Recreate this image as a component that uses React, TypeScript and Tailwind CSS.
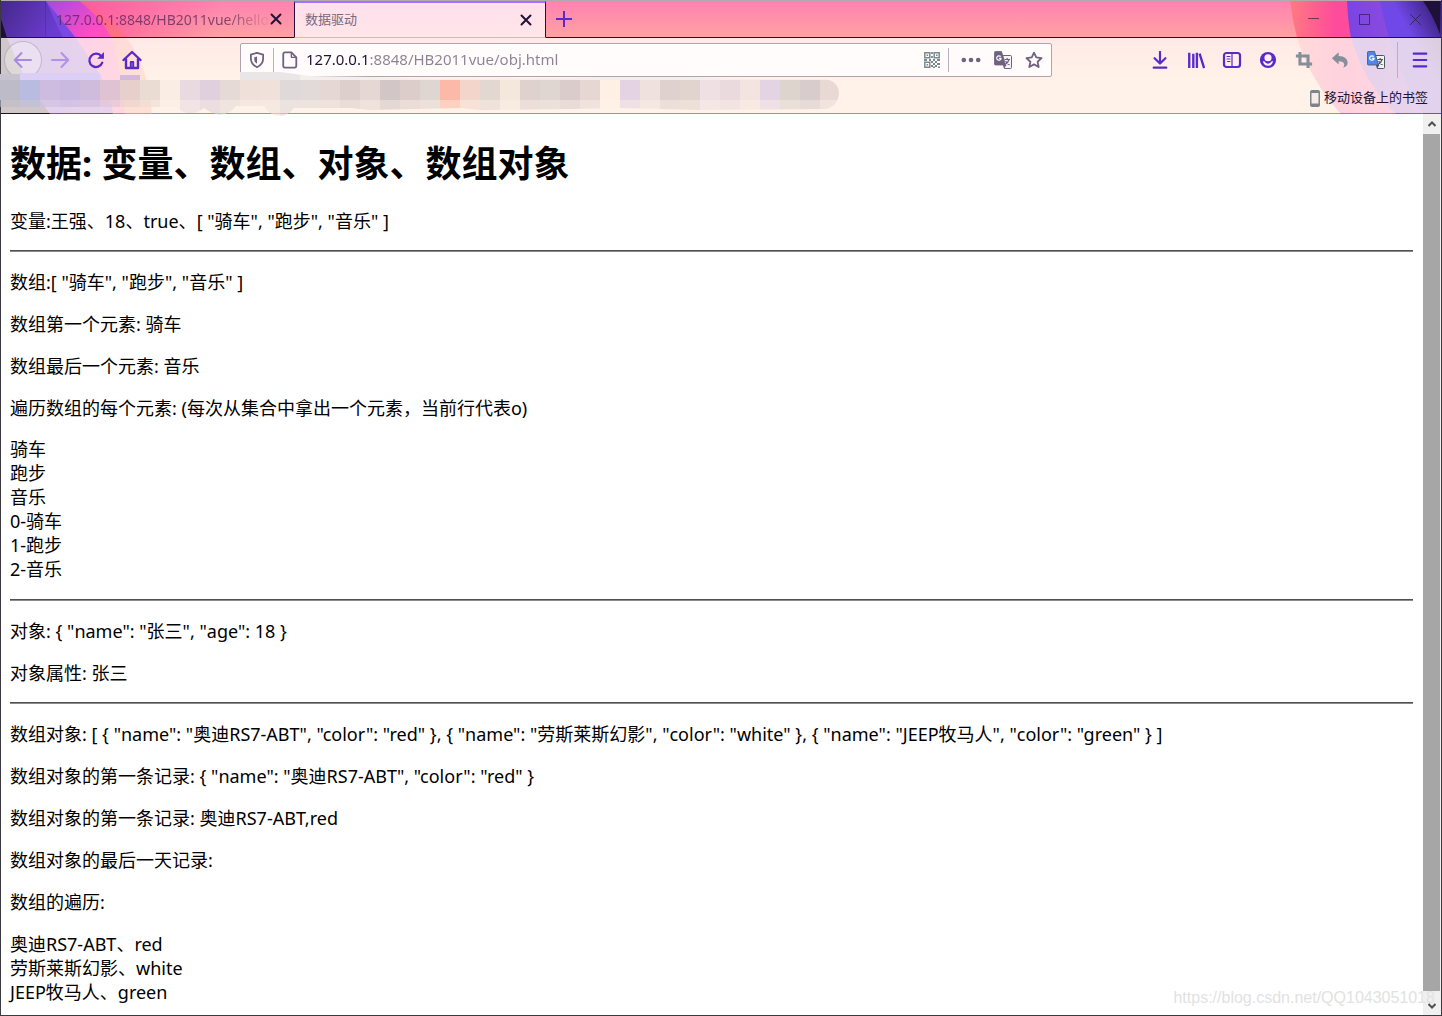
import type { ReactNode } from 'react'

const MOSAIC = [
  '#bdbbc8', '#b8bce0', '#cdbce0', '#c9b8e0', '#cfbbdc', '#e0c3d3', '#e7d0cc', '#ebdcd3', '#faede3', '#e9dae2',
  '#e0cfdc', '#e6dad7', '#efe1da', '#f0e2da', '#e0d9da', '#e2dad9', '#e5d7d4', '#dccfcc', '#e4d7d4', '#d3c6c6',
  '#dccdcb', '#dfd5d1', '#fdb9a8', '#f3d5cb', '#e3d7d2', '#f4e8dd', '#dfd2ce', '#dfd6d1', '#dacccb', '#e6d7d3',
  '#fef0e4', '#e4d3e3', '#efe1dd', '#dfd2ce', '#e1d4ce', '#efe0e3', '#eadadd', '#f3e4df', '#e4d3e2', '#ddd4cd',
  '#d9cccc', '#e8d9d5',
]

const hobbies = ['骑车', '跑步', '音乐']
const cars = [
  { name: '奥迪RS7-ABT', color: 'red' },
  { name: '劳斯莱斯幻影', color: 'white' },
  { name: 'JEEP牧马人', color: 'green' },
]

const listText = `[ ${hobbies.map((h) => `"${h}"`).join(', ')} ]`
const carText = (c: { name: string; color: string }) => `{ "name": "${c.name}", "color": "${c.color}" }`

function Icon({ children, fill, size = 20 }: { children: ReactNode; fill?: boolean; size?: number }) {
  return (
    <svg
      width={size}
      height={size}
      viewBox="0 0 20 20"
      fill={fill ? 'currentColor' : 'none'}
      stroke={fill ? 'none' : 'currentColor'}
      strokeWidth="2"
      strokeLinecap="round"
      strokeLinejoin="round"
      className="shrink-0"
      aria-hidden="true"
    >
      {children}
    </svg>
  )
}

function ToolButton({ label, className = '', children }: { label: string; className?: string; children: ReactNode }) {
  return (
    <button aria-label={label} className={`flex h-9 w-9 shrink-0 items-center justify-center ${className}`}>
      {children}
    </button>
  )
}

function CloseIcon() {
  return (
    <svg width="12" height="12" viewBox="0 0 12 12" stroke="#20123a" strokeWidth="2" strokeLinecap="round" aria-hidden="true">
      <path d="M1.5 1.5l9 9M10.5 1.5l-9 9" />
    </svg>
  )
}

function TranslateIcon({ front, back }: { front: string; back: string }) {
  return (
    <svg width="18" height="18" viewBox="0 0 18 18" aria-hidden="true">
      <path d="M8.5 4.5h8a1 1 0 0 1 1 1v11a1 1 0 0 1-1 1h-6z" fill="#f4f2f4" stroke={back} />
      <path d="M10.5 8.5h5.5M13.2 7v1.5M15 8.5c-.6 2.4-2 4-4 5M11.6 10c.7 1.8 2 3 4 3.8" fill="none" stroke={back} strokeWidth="1.2" />
      <path d="M9 14h3.5l-2.5 3.5z" fill={back} />
      <path d="M1.5.5h6l4 13.5h-10a1 1 0 0 1-1-1v-11.5a1 1 0 0 1 1-1z" fill={front} stroke={back} strokeWidth=".8" />
      <path d="M6.7 5.7a2.2 2.2 0 1 0 .4 1.600h-2" fill="none" stroke="#fff" strokeWidth="1.2" />
    </svg>
  )
}

function QrIcon() {
  return (
    <svg width="16" height="16" viewBox="0 0 16 16" fill="none" stroke="#7b8a90" aria-hidden="true">
      <path d="M.8.8h5v5h-5zM10.2.8h5v5h-5zM.8 10.2h5v5h-5z" strokeWidth="1.5" />
      <path d="M2.5 3.3h1.6M12 3.3h1.6M2.5 12.7h1.6" strokeWidth="1.6" />
      <path d="M8 0v2M8 4v2M0 8h3M5 8h2M9 8h2M13 8h3M7 10h2M11 10h2M9 12h2M13 12h3M7 14h2M11 14h2M9 15.5h2M14 15.5h2" strokeWidth="1.8" />
    </svg>
  )
}

// theme artwork behind the tab strip and toolbars
function ThemeArt() {
  return (
    <>
      <svg className="absolute left-0 top-0" width="220" height="113" aria-hidden="true">
        <defs>
          <linearGradient id="deep" x1="0" y1="0" x2="1" y2=".4">
            <stop offset="0" stopColor="#38206c" />
            <stop offset="1" stopColor="#6738cc" />
          </linearGradient>
          <linearGradient id="violet" x1="0" y1="0" x2="1" y2="0">
            <stop offset="0" stopColor="#6b43dc" />
            <stop offset=".6" stopColor="#7a48e2" />
            <stop offset="1" stopColor="#9044de" />
          </linearGradient>
          <linearGradient id="magenta" x1=".4" y1="0" x2="1" y2=".6">
            <stop offset="0" stopColor="#a64be0" />
            <stop offset=".5" stopColor="#ff4bc4" />
            <stop offset="1" stopColor="#ff5fb0" />
          </linearGradient>
          <linearGradient id="coral" x1=".4" y1="0" x2="1" y2=".5">
            <stop offset="0" stopColor="#ff4f9e" />
            <stop offset="1" stopColor="#ff8a6e" />
          </linearGradient>
          <linearGradient id="fadePink" x1="0" y1="0" x2="1" y2="0">
            <stop offset="0" stopColor="#ff5c9e" />
            <stop offset="1" stopColor="#ff5c9e" stopOpacity="0" />
          </linearGradient>
        </defs>
        <rect x="80" width="140" height="37" fill="url(#fadePink)" />
        <path d="M0 0h80Q125 25 140 62Q150 90 151 113H0z" fill="url(#coral)" />
        <path d="M0 0h78Q102 18 112 40Q122 80 124 113H0z" fill="url(#magenta)" />
        <path d="M0 0h45L75 37L100 75Q110 95 112 113H0z" fill="url(#violet)" />
        <path d="M0 0h45L62 37H0z" fill="url(#deep)" opacity=".75" />
        <path d="M0 18L6 37L25 80L49 113H0z" fill="#1c0f33" />
      </svg>
      <svg className="absolute right-0 top-0" width="200" height="113" aria-hidden="true">
        <defs>
          <linearGradient id="rPink" x1="0" y1="0" x2="1" y2="0">
            <stop offset="0" stopColor="#ff7a80" />
            <stop offset=".3" stopColor="#ff4b9b" />
            <stop offset="1" stopColor="#ff4fa8" />
          </linearGradient>
          <linearGradient id="rPlum" x1="0" y1="0" x2="1" y2="0">
            <stop offset="0" stopColor="#7a45e0" />
            <stop offset="1" stopColor="#a050e0" />
          </linearGradient>
          <linearGradient id="rViolet" x1="0" y1="1" x2="1" y2="0">
            <stop offset="0" stopColor="#7048e8" />
            <stop offset=".6" stopColor="#7048e8" />
            <stop offset="1" stopColor="#2c185e" />
          </linearGradient>
        </defs>
        <path d="M49 0Q52 22 57 40Q70 80 100 113H200V0z" fill="url(#rPink)" />
        <path d="M106 0Q107 22 110 37Q125 85 155 113H200V0z" fill="url(#rPlum)" />
        <path d="M139 0Q150 60 182 113H200V0z" fill="url(#rViolet)" />
        <path d="M182 0Q192 14 199 33V0z" fill="#1e1038" />
      </svg>
    </>
  )
}

// pixelated smear that hides the saved bookmarks
function HiddenBookmarks() {
  return (
    <svg className="absolute -left-px top-[34px]" width="840" height="44" aria-hidden="true">
      <defs>
        <clipPath id="smear">
          <path d="M0 2H20V1H100V8H240V0H280L310 4L370 5L430 7L580 6L600 5H690L740 7H826Q839 10 839 22Q838 34 826 37L700 38L620 36L570 37L480 38L460 36L370 38L350 36H294Q288 44 280 44Q270 44 264 34H236Q230 42 220 43Q210 41 204 36Q198 41 190 41Q182 41 176 35H0z" />
        </clipPath>
      </defs>
      <g clipPath="url(#smear)">
        <rect x="0" y="0" width="20" height="8" fill="#c6c3cf" />
        <rect x="20" y="0" width="80" height="8" fill="#dccff5" />
        <rect x="240" y="0" width="60" height="8" fill="#eae6e7" />
        <rect x="300" y="0" width="540" height="8" fill="#f3efed" />
        {MOSAIC.map((color, i) => (
          <g key={i} fill={color}>
            <rect x={i * 20} y="8" width="20" height="20" />
            <rect x={i * 20} y="28" width="20" height="16" opacity=".6" />
          </g>
        ))}
      </g>
      <rect x="120" y="3" width="20" height="5" fill="#d5b9dc" />
    </svg>
  )
}

function TabStrip() {
  return (
    <div className="relative flex h-[37px] border-b border-[#20123a] pl-[44px]">
      <button className="flex w-[249px] items-center justify-between border-l border-[#20123a]/20 pl-[10px] pr-3 text-[13px]">
        <span className="whitespace-nowrap bg-[linear-gradient(90deg,#4c2550b8_170px,#4c255010_212px)] bg-clip-text text-left text-[14px] text-transparent">
          127.0.0.1:8848/HB2011vue/hello
        </span>
        <CloseIcon />
      </button>
      <button className="-mb-px flex w-[252px] items-center justify-between border-x border-b border-t-2 border-x-[#20123a] border-b-[#c9bcc8] border-t-[#a970ff] bg-[linear-gradient(#ffe0ec,#ffe6e8)] pl-[10px] pr-[13px] text-[13px] text-[#796880]">
        数据驱动
        <CloseIcon />
      </button>
      <button aria-label="打开新标签页" className="flex w-9 items-center justify-center text-[#592acb]">
        <Icon>
          <path d="M10 2v16M2 10h16" strokeLinecap="butt" />
        </Icon>
      </button>
      <div className="ml-auto flex text-[#20123a]/60">
        <button aria-label="最小化" className="flex w-[51px] items-center justify-center">
          <svg width="11" height="11" stroke="currentColor" aria-hidden="true"><path d="M0 4.5h11" /></svg>
        </button>
        <button aria-label="最大化" className="flex w-[51px] items-center justify-center">
          <svg width="11" height="11" fill="none" stroke="currentColor" aria-hidden="true"><path d="M.5.5h10v10H.5z" /></svg>
        </button>
        <button aria-label="关闭" className="flex w-[51px] items-center justify-center">
          <svg width="11" height="11" stroke="currentColor" aria-hidden="true"><path d="M0 0l11 11M11 0L0 11" /></svg>
        </button>
      </div>
    </div>
  )
}

function UrlBar() {
  return (
    <div className="ml-[90px] flex h-[34px] w-[812px] items-center rounded-xs border border-[#b3a3ae] bg-[#fffcfb] text-[#6f6180]">
      <button aria-label="跟踪保护" className="flex w-8 justify-center">
        <Icon size={18}>
          <path d="M10 2L16.8 4v4.500c0 4.500-3 7.500-6.800 9.500c-3.800-2-6.800-5-6.800-9.500V4z" />
          <path d="M10 6L7 7v2.500c0 2 1.200 3.500 3 4.700z" fill="currentColor" stroke="none" />
        </Icon>
      </button>
      <div className="h-6 w-px bg-[#b9afbf]" />
      <button aria-label="网站信息" className="flex w-8 justify-center">
        <Icon size={18}>
          <path d="M4.5 1.500h7L17 7v9.500a2 2 0 0 1-2 2H4.500a2 2 0 0 1-2-2v-13a2 2 0 0 1 2-2z" />
          <path d="M11.5 1.500V7H17" strokeWidth="1.5" />
        </Icon>
      </button>
      <input
        aria-label="地址"
        defaultValue="127.0.0.1:8848/HB2011vue/obj.html"
        className="min-w-0 flex-1 bg-[linear-gradient(90deg,#20123a_64px,#8b8296_64px)] bg-clip-text text-[15px] text-transparent outline-none"
      />
      <button aria-label="二维码" className="flex w-8 justify-center"><QrIcon /></button>
      <div className="h-6 w-px bg-[#b9afbf]" />
      <button aria-label="页面操作" className="ml-1 flex w-9 justify-center">
        <Icon fill>
          <circle cx="2.8" cy="10" r="2.3" />
          <circle cx="10" cy="10" r="2.3" />
          <circle cx="17.2" cy="10" r="2.3" />
        </Icon>
      </button>
      <button aria-label="翻译此页" className="flex w-7 justify-center">
        <TranslateIcon front="#6f6180" back="#6f6180" />
      </button>
      <button aria-label="添加书签" className="flex w-[34px] justify-center">
        <Icon size={18}>
          <path d="M10 1.800l2.500 5.400 5.900.7-4.400 4 1.200 5.900L10 14.900l-5.200 2.900 1.200-5.900-4.400-4 5.900-.7z" />
        </Icon>
      </button>
    </div>
  )
}

function NavBar() {
  return (
    <div className="flex h-[42px] items-center pb-px pl-[3px] pr-[3px] pt-[2px] text-[#592acb]">
      <button
        aria-label="后退"
        className="flex h-[38px] w-[38px] shrink-0 items-center justify-center rounded-full border border-[#20123a]/20 bg-white/30 text-[#a88ae0]"
      >
        <Icon><path d="M18 10H2M8.500 3L1.800 10l6.700 7" /></Icon>
      </button>
      <ToolButton label="前进" className="text-[#b092e6]">
        <Icon><path d="M2 10h16M11.500 3l6.700 7-6.700 7" /></Icon>
      </ToolButton>
      <ToolButton label="刷新">
        <Icon size={18}>
          <path d="M16 6A7.400 7.400 0 1 0 17 13" strokeWidth="2.5" />
          <path d="M18.800 1v7.500h-7.500z" fill="currentColor" stroke="none" />
        </Icon>
      </ToolButton>
      <ToolButton label="主页">
        <Icon>
          <path d="M1.500 10L10 2l8.500 8M4 9v9h12V9" strokeWidth="2.4" />
          <path d="M8.800 17v-5h2.400v5" />
        </Icon>
      </ToolButton>
      <UrlBar />
      <div className="ml-auto flex items-center">
        <ToolButton label="下载"><Icon size={18}><path d="M10 1v12M4 8l6 6 6-6M3 18.500h14" strokeWidth="2.4" /></Icon></ToolButton>
        <ToolButton label="书签库">
          <Icon size={18}>
            <path d="M2.500 2v17M7 3v16M11 2v17M14 3l5 16" strokeLinecap="butt" strokeWidth="2.6" />
          </Icon>
        </ToolButton>
        <ToolButton label="侧边栏">
          <Icon>
            <rect x="2" y="3" width="16" height="14" rx="2.500" strokeWidth="2.2" />
            <path d="M10 3v14" strokeWidth="1.2" />
            <path d="M5 6.500H8M5 9H8M5.500 11.500H8" strokeWidth="1.2" />
          </Icon>
        </ToolButton>
        <ToolButton label="账户">
          <Icon size={18} fill>
            <circle cx="10" cy="10" r="9" />
            <circle cx="10" cy="7.500" r="4" fill="#fdeef0" />
            <path d="M4.200 11.500h1.700q1.600 2.600 4.100 2.600t4.100-2.600h1.700q-1.400 5-5.800 5t-5.800-5z" fill="#fdeef0" />
          </Icon>
        </ToolButton>
        <ToolButton label="截图" className="text-[#858e99]">
          <Icon size={18}><path d="M5.500 1v13.500H19M1 5.500h13.500V19" strokeLinecap="butt" strokeWidth="3.4" strokeLinejoin="miter" /></Icon>
        </ToolButton>
        <ToolButton label="撤销" className="text-[#858e99]">
          <Icon size={18} fill><path d="M1 8L8.500 1.500V5.500C15 5.500 18.500 9 18.500 13c0 2.500-1.500 4.500-5 5.500c2.500-3.500 1.500-7-5-7V15z" /></Icon>
        </ToolButton>
        <ToolButton label="翻译"><TranslateIcon front="#4d86ee" back="#4a5560" /></ToolButton>
        <div className="ml-[3px] h-9 w-px bg-[#20123a]/20" />
        <ToolButton label="菜单" className="ml-1"><Icon size={18}><path d="M3 3h14M3 10h14M3 17h14" strokeWidth="2.4" /></Icon></ToolButton>
      </div>
    </div>
  )
}

function ScrollBar() {
  return (
    <div className="flex w-[18px] shrink-0 flex-col bg-[#f0f0f0]">
      <button aria-label="向上滚动" className="flex h-5 items-center justify-center">
        <svg width="8" height="6" fill="none" stroke="#505050" strokeWidth="2" aria-hidden="true"><path d="M.5 5L4 1.500 7.500 5" /></svg>
      </button>
      <div className="mr-px flex-1 bg-[#a6a6a6]" />
      <button aria-label="向下滚动" className="mt-[6px] flex h-[18px] items-center justify-center">
        <svg width="8" height="6" fill="none" stroke="#505050" strokeWidth="2" aria-hidden="true"><path d="M.5 1L4 4.500 7.500 1" /></svg>
      </button>
    </div>
  )
}

function Rule({ className = '' }: { className?: string }) {
  return <hr className={`h-[2px] border-0 border-t border-[#505050] bg-[#8a8a8a] ${className}`} />
}

export default function App() {
  return (
    <div className="relative flex min-h-screen flex-col border-x border-b border-[#3c3a40] bg-white font-['Noto_Sans','Noto_Sans_CJK_SC',sans-serif]">
      <header className="relative border-b border-t border-b-[#b98a78] border-t-[#b0aaac] bg-[linear-gradient(#ff82b1,#ffa2a2_37px,#ffb8c4_37px,#ffe6cc_80px)]">
        <ThemeArt />
        <TabStrip />
        <div className="relative bg-[#fff5efcc]">
          <NavBar />
          <div className="flex h-[33px] items-center justify-end pr-[13px] pt-[3px]">
            <a href="#bookmarks" className="flex items-center gap-[3px] text-[13px] text-[#20123a]">
              <svg width="12" height="17" viewBox="0 0 11 17" aria-hidden="true">
                <rect width="10" height="17" x=".5" rx="2" fill="#7d848a" />
                <rect x="2" y="3" width="7" height="10.5" fill="#f5ece8" />
              </svg>
              移动设备上的书签
            </a>
          </div>
          <HiddenBookmarks />
        </div>
      </header>

      <div className="flex flex-1">
        <main className="min-w-0 flex-1 pl-[9px] pr-[10px] pt-[26px] text-[18px] leading-6 text-black">
          <h1 className="mb-[21px] text-[36px] font-bold leading-[48px]">数据: 变量、数组、对象、数组对象</h1>
          <p>变量:王强、18、true、{listText}</p>
          <Rule className="mb-[18px] mt-[17px]" />
          <div className="space-y-[18px]">
            <p>数组:{listText}</p>
            <p>数组第一个元素: {hobbies[0]}</p>
            <p>数组最后一个元素: {hobbies[2]}</p>
            <p>遍历数组的每个元素: (每次从集合中拿出一个元素，当前行代表o)</p>
            <ul className="-mt-px">
              {hobbies.map((h) => <li key={h}>{h}</li>)}
              {hobbies.map((h, i) => <li key={h}>{i}-{h}</li>)}
            </ul>
            <Rule />
            <p>对象: {'{ "name": "张三", "age": 18 }'}</p>
            <p>对象属性: 张三</p>
          </div>
          <Rule className="mb-[18px] mt-[17px]" />
          <div className="space-y-[18px]">
            <p>数组对象: [ {cars.map(carText).join(', ')} ]</p>
            <p>数组对象的第一条记录: {carText(cars[0])}</p>
            <p>数组对象的第一条记录: {cars[0].name},{cars[0].color}</p>
            <p>数组对象的最后一天记录:</p>
            <p>数组的遍历:</p>
            <ul>
              {cars.map((c) => <li key={c.name}>{c.name}、{c.color}</li>)}
            </ul>
          </div>
        </main>
        <ScrollBar />
      </div>
      <span className="pointer-events-none absolute bottom-[5px] right-[6px] font-['Liberation_Sans',sans-serif] text-base text-[#e2e2e2]">
        https://blog.csdn.net/QQ1043051018
      </span>
    </div>
  )
}
